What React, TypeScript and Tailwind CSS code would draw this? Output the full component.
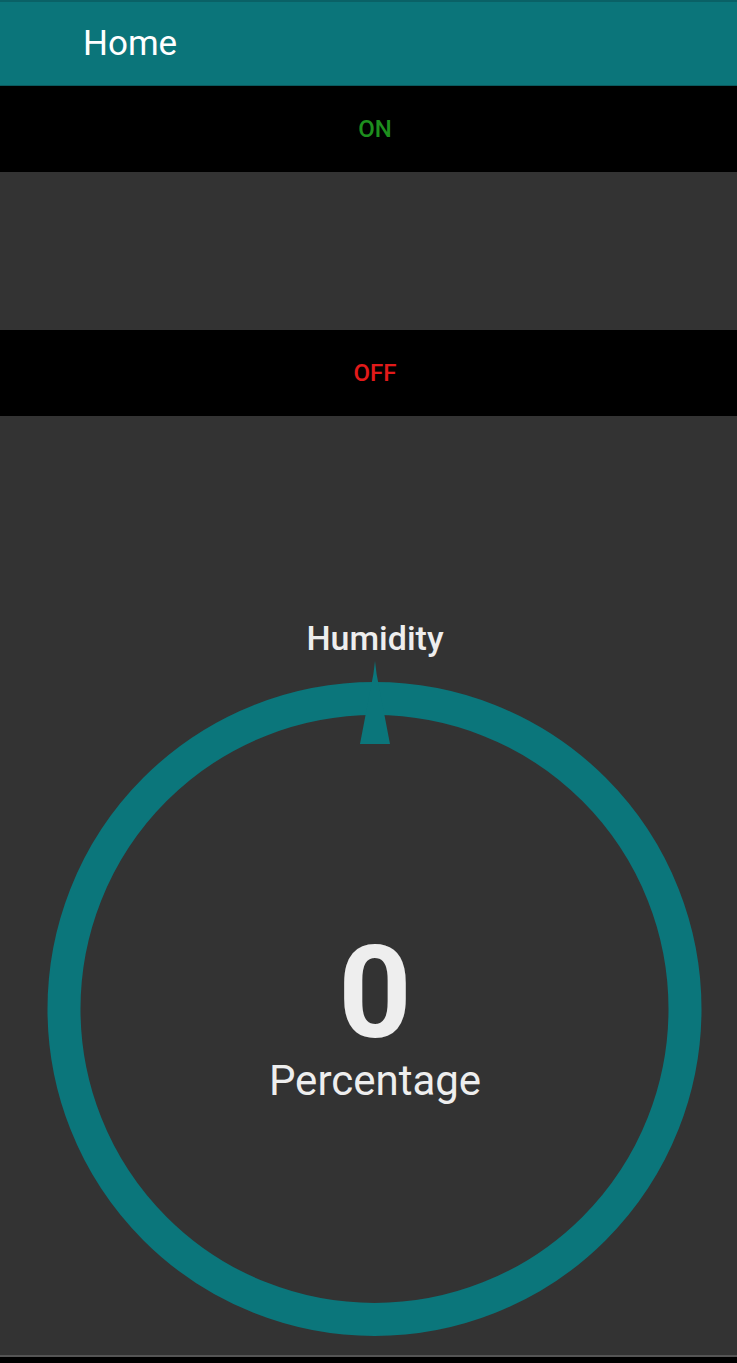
import React from "react";

const TEAL = "#0b767b";

function Gauge({ value, label }: { value: number; label: string }) {
  return (
    <div className="relative w-[737px] h-[690px]">
      <svg width="737" height="690" viewBox="0 0 737 690" className="block">
        <circle cx="374.5" cy="351" r="310.5" fill="none" stroke={TEAL} strokeWidth="33" />
        {/* needle */}
        <polygon points="375,3 376.6,16 390,86 360,86 373.4,16" fill={TEAL} />
      </svg>
      <div className="absolute left-0 right-0 top-[271px] pl-[13px] flex flex-col items-center text-[#eeeeee]">
        <span className="text-[128px] font-bold leading-none">{value}</span>
        <span className="mt-[3px] text-[42px] leading-none">{label}</span>
      </div>
    </div>
  );
}

export default function App() {
  return (
    <div
      className="w-[737px] h-[1363px] bg-[#333333] flex flex-col overflow-hidden"
      style={{ fontFamily: "Roboto, 'Noto Sans', sans-serif" }}
    >
      <header className="h-[86px] shrink-0 bg-[#0b757a] border-t-2 border-t-[#0a6166] border-b border-b-[#0a5a5e] flex items-center pl-[83px]">
        <h1 className="text-[35px] text-white leading-none">Home</h1>
      </header>

      <button className="h-[86px] shrink-0 bg-black flex items-center justify-center pl-[13px] text-[24px] font-medium text-[#1e8f1e]">
        ON
      </button>

      <div className="h-[158px] shrink-0" />

      <button className="h-[86px] shrink-0 bg-black flex items-center justify-center pl-[13px] text-[24px] font-medium text-[#e21a1a]">
        OFF
      </button>

      <section className="flex-1 flex flex-col items-center">
        <h2 className="mt-[202px] pl-[13px] text-[34px] leading-[40px] font-medium text-[#eeeeee]">Humidity</h2>
        <Gauge value={0} label="Percentage" />
      </section>

      <div className="h-[8px] shrink-0 border-t-2 border-[#555555] bg-black" />
    </div>
  );
}
